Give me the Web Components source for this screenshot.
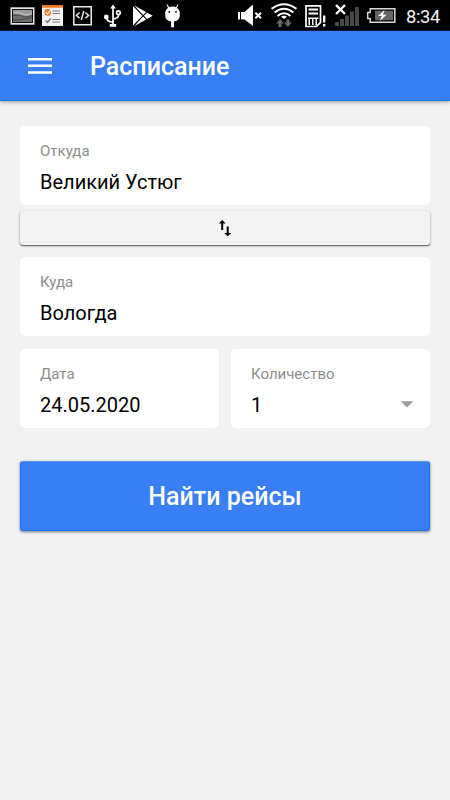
<!DOCTYPE html>
<html lang="ru">
<head>
<meta charset="utf-8">
<title>Расписание</title>
<style>
html,body{margin:0;height:100%;background:#f2f2f2;font-family:Roboto,"Noto Sans",sans-serif;overflow:hidden}
</style>
</head>
<body>
<schedule-app></schedule-app>
<script>
function define(name, html) {
  const template = document.createElement('template');
  template.innerHTML = html;
  customElements.define(name, class extends HTMLElement {
    constructor() {
      super();
      this.attachShadow({mode: 'open'}).append(template.content.cloneNode(true));
    }
  });
}

define('status-bar', `
<style>
:host{display:flex;box-sizing:border-box;height:31px;background:#000;padding-left:8px;color:#fff;border-bottom:1px solid #0a1733}
svg{display:block;flex:none;height:31px}
.gap{flex:1}
.time{width:44px;padding-top:1px;font-size:18.4px;line-height:31px;letter-spacing:-.4px;color:#f2f2f2}
</style>
<svg width="30" viewBox="8 0 30 31"><path fill="#e4e4e4" d="M10.500 7.300h24v17.400h-24z"/><path fill="#111" d="M12 9h21v14H12z"/><path fill="#6e6e6e" d="M13 10h19v12H13z"/><path fill="#999" d="M13 10h19v5q-5 2-10 .5T13 13z"/><path d="M13 13q7-1 10 1t9-1" fill="none" stroke="#c4c4c4"/><path d="M13 15.500q7-1 10 .7t9-.7M13 20q12 0 19-3" fill="none" stroke="#4a4a4a"/></svg>
<svg width="31" viewBox="38 0 31 31"><path fill="#f2f2f2" d="M42 5h21v21H42z"/><path fill="#f07a1c" d="M42 5h21v2.700H42z"/><circle cx="47.700" cy="12.400" r="3.300" fill="#f07a1c"/><path d="M45.800 12.200l1.700 1.800 3.200-4" fill="none" stroke="#fff" stroke-width="1.100"/><path d="M45.500 20.500l2 2 3.300-4M52.500 11h7.500M52.500 13.500h7.500M52.500 19.500h7.500M52.500 22h7.500" fill="none" stroke="#777" stroke-width="1.200"/></svg>
<svg width="30" viewBox="69 0 30 31"><path fill="none" stroke="#eee" stroke-width="1.500" d="M73.800 6.800h17.400v17.900H73.800z"/><path d="M79.600 12.500l-3.200 2.900 3.200 2.900M85.400 12.500l3.200 2.900-3.200 2.900M83.800 11l-2.500 9" stroke="#e4e4e4" stroke-width="1.500" fill="none"/></svg>
<svg width="29" viewBox="99 0 29 31"><g fill="none" stroke="#fff" stroke-width="1.700"><path d="M113 7v18M106.500 17q0 5 6.500 5M118.500 15q0 3.500-5.500 4"/><circle cx="118.400" cy="12.700" r="1.800"/></g><circle cx="106.300" cy="17" r="2.400" fill="#fff"/><path d="M110.200 8.500l2.800-4 2.800 4zM109.800 24h6.400v2.800h-6.400z" fill="#fff"/></svg>
<svg width="32" viewBox="128 0 32 31"><path fill="#fff" d="M133 6v19.500l9.300-9.800zM134.200 5.500l8.900 9.400 3-3zM134.200 26.300l8.900-9.700 3 3zM147 12.400l-3.100 3.300 3.100 3.300 5.700-3.300z"/></svg>
<svg width="28" viewBox="160 0 28 31"><path fill="#fff" d="M165.200 12q1.800-5.500 7.300-5.500T179.800 12v3.500q0 4.500-4.800 5.800h-1v6h-3v-6h-1q-4.800-1.300-4.800-5.800z"/><path d="M167 4.500l2 4M178 4.500l-2 4" stroke="#fff" stroke-width="1.100"/><circle cx="169.300" cy="11.900" r=".9"/><circle cx="176" cy="11.900" r=".9"/></svg>
<span class="gap"></span>
<svg width="32" viewBox="234 0 32 31"><path fill="#fff" d="M238 12h2v7.500h-2zM241 12h3.500l8.500-7.500v21.500L244.500 19.500H241z"/><path d="M255.400 12.700l5.600 5.600M261 12.700l-5.600 5.600" stroke="#fff" stroke-width="2"/></svg>
<svg width="36" viewBox="266 0 36 31"><g fill="none" stroke="#fff" stroke-width="2"><path d="M271.500 8.800q12.500-9.300 25 0M274.600 12.500q9.400-7.400 18.800 0M277.600 16q6.400-5.400 12.800 0"/></g><path d="M281 16.800q3-2.200 6 0l-3 2.200z" fill="#fff"/><path fill="#686868" d="M276 23.500l4-4.500 4 4.500h-2.500v3.500h-3v-3.500zM284 22.500l4 4.500 4-4.500h-2.500v-3h-3v3z"/></svg>
<svg width="29" viewBox="302 0 29 31"><path fill="none" stroke="#fff" stroke-width="1.700" d="M306 5.800h14.500v16.500l-4 4.200H306z"/><path fill="#fff" d="M308.500 8.500h9.500v2h-9.500zM308.500 12.500h9.500v2h-9.500zM308 17.500h10.500V19H308zM308.500 18h1.500v7h-1.500zM312 18h1.500v7H312zM315.500 18h1.500v7h-1.500z"/><path d="M324.200 15.500v7M324.200 24v2.500" stroke="#fff" stroke-width="2.300"/></svg>
<svg width="33" viewBox="331 0 33 31"><path fill="#484848" d="M335 22h4v4h-4zM340 19h4v7h-4zM345 15.500h4V26h-4zM350 11.500h4V26h-4zM355 7h4v19h-4z"/><path d="M336 5l9 9M345 5l-9 9" stroke="#fff" stroke-width="2.400"/></svg>
<svg width="42" viewBox="364 0 42 31"><path fill="none" stroke="#d8d8d8" stroke-width="1.500" d="M370.200 8.700h24.600v13.600h-24.600v-3.800h-2.500v-6h2.500z"/><path fill="#646464" d="M375 10.700h18v9.600h-18z"/><path fill="#fff" d="M384.500 10l-6.500 6h3.800l-2 5 6.800-6.300h-3.600z"/></svg>
<span class="time">8:34</span>
`);

define('app-header', `
<style>
:host{display:flex;box-sizing:border-box;height:70px;padding:1px 28px 0;align-items:center;background:#387ff5;border-bottom:1px solid #1475f5;box-shadow:0 1px 4px rgba(0,0,0,.38);color:#fff}
svg{display:block;margin-right:38px}
h1{margin:0;padding-top:2px;font-size:25px;line-height:30px;font-weight:500}
</style>
<svg width="24" height="18" viewBox="0 0 24 18" fill="#fff"><path d="M0 1h24v2.500H0zM0 7.600h24v2.500H0zM0 14.200h24v2.500H0z"/></svg>
<h1><slot></slot></h1>
`);

define('form-field', `
<style>
:host{display:flex;box-sizing:border-box;height:79px;background:#fff;border-radius:5px;padding:16px 16px 0 20px;justify-content:space-between}
.label{font-size:15px;line-height:18px;color:#8c8c8c}
.value{margin-top:10px;font-size:20px;line-height:24px;color:#000}
</style>
<div><div class="label"><slot name="label"></slot></div><div class="value"><slot></slot></div></div>
<slot name="icon"></slot>
`);

define('drop-arrow', `
<style>:host{display:block;padding-top:36px;height:7px}svg{display:block}</style>
<svg width="14" height="7" viewBox="0 0 14 7"><path d="M.8.2h12.400L7 6.500z" fill="#999"/></svg>
`);

define('swap-button', `
<style>
:host{display:block}
button{display:flex;width:100%;height:34px;padding:0;align-items:center;justify-content:center;border:0;border-radius:3px;background:#f3f3f3;box-shadow:0 1px 1px -.5px rgba(0,0,0,.45),0 1px 3px rgba(0,0,0,.3)}
svg{display:block}
</style>
<button aria-label="Поменять местами"><svg width="14" height="18" viewBox="0 0 14 18"><path fill="#000" d="M4.200 1L7.600 4.500H5.200V11H3.200V4.500H.8zM8.700 7.500h2V14h2.500L9.700 17.300 6.200 14h2.500z"/></svg></button>
`);

define('submit-button', `
<style>
:host{display:block}
button{display:block;box-sizing:border-box;width:100%;height:70px;padding:2px 0 0;border:1px solid #1675f8;border-top-color:#569bf8;border-radius:3px;background:#387ff5;color:#fff;font:500 25px/66px Roboto,"Noto Sans",sans-serif;box-shadow:0 1px 3px rgba(0,0,0,.5)}
</style>
<button><slot></slot></button>
`);

define('schedule-app', `
<style>
:host{display:flex;flex-direction:column;height:100vh}
main{display:flex;flex-direction:column;padding:25px 20px}
swap-button{margin:6px 0 12px}
.row{display:grid;grid-template-columns:199px 199px;column-gap:12px;margin:13px 0 33px;align-items:start}
</style>
<status-bar></status-bar>
<app-header>Расписание</app-header>
<main>
<form-field><span slot="label">Откуда</span>Великий Устюг</form-field>
<swap-button></swap-button>
<form-field><span slot="label">Куда</span>Вологда</form-field>
<div class="row">
<form-field><span slot="label">Дата</span>24.05.2020</form-field>
<form-field><span slot="label">Количество</span>1<drop-arrow slot="icon"></drop-arrow></form-field>
</div>
<submit-button>Найти рейсы</submit-button>
</main>
`);
</script>
</body>
</html>
